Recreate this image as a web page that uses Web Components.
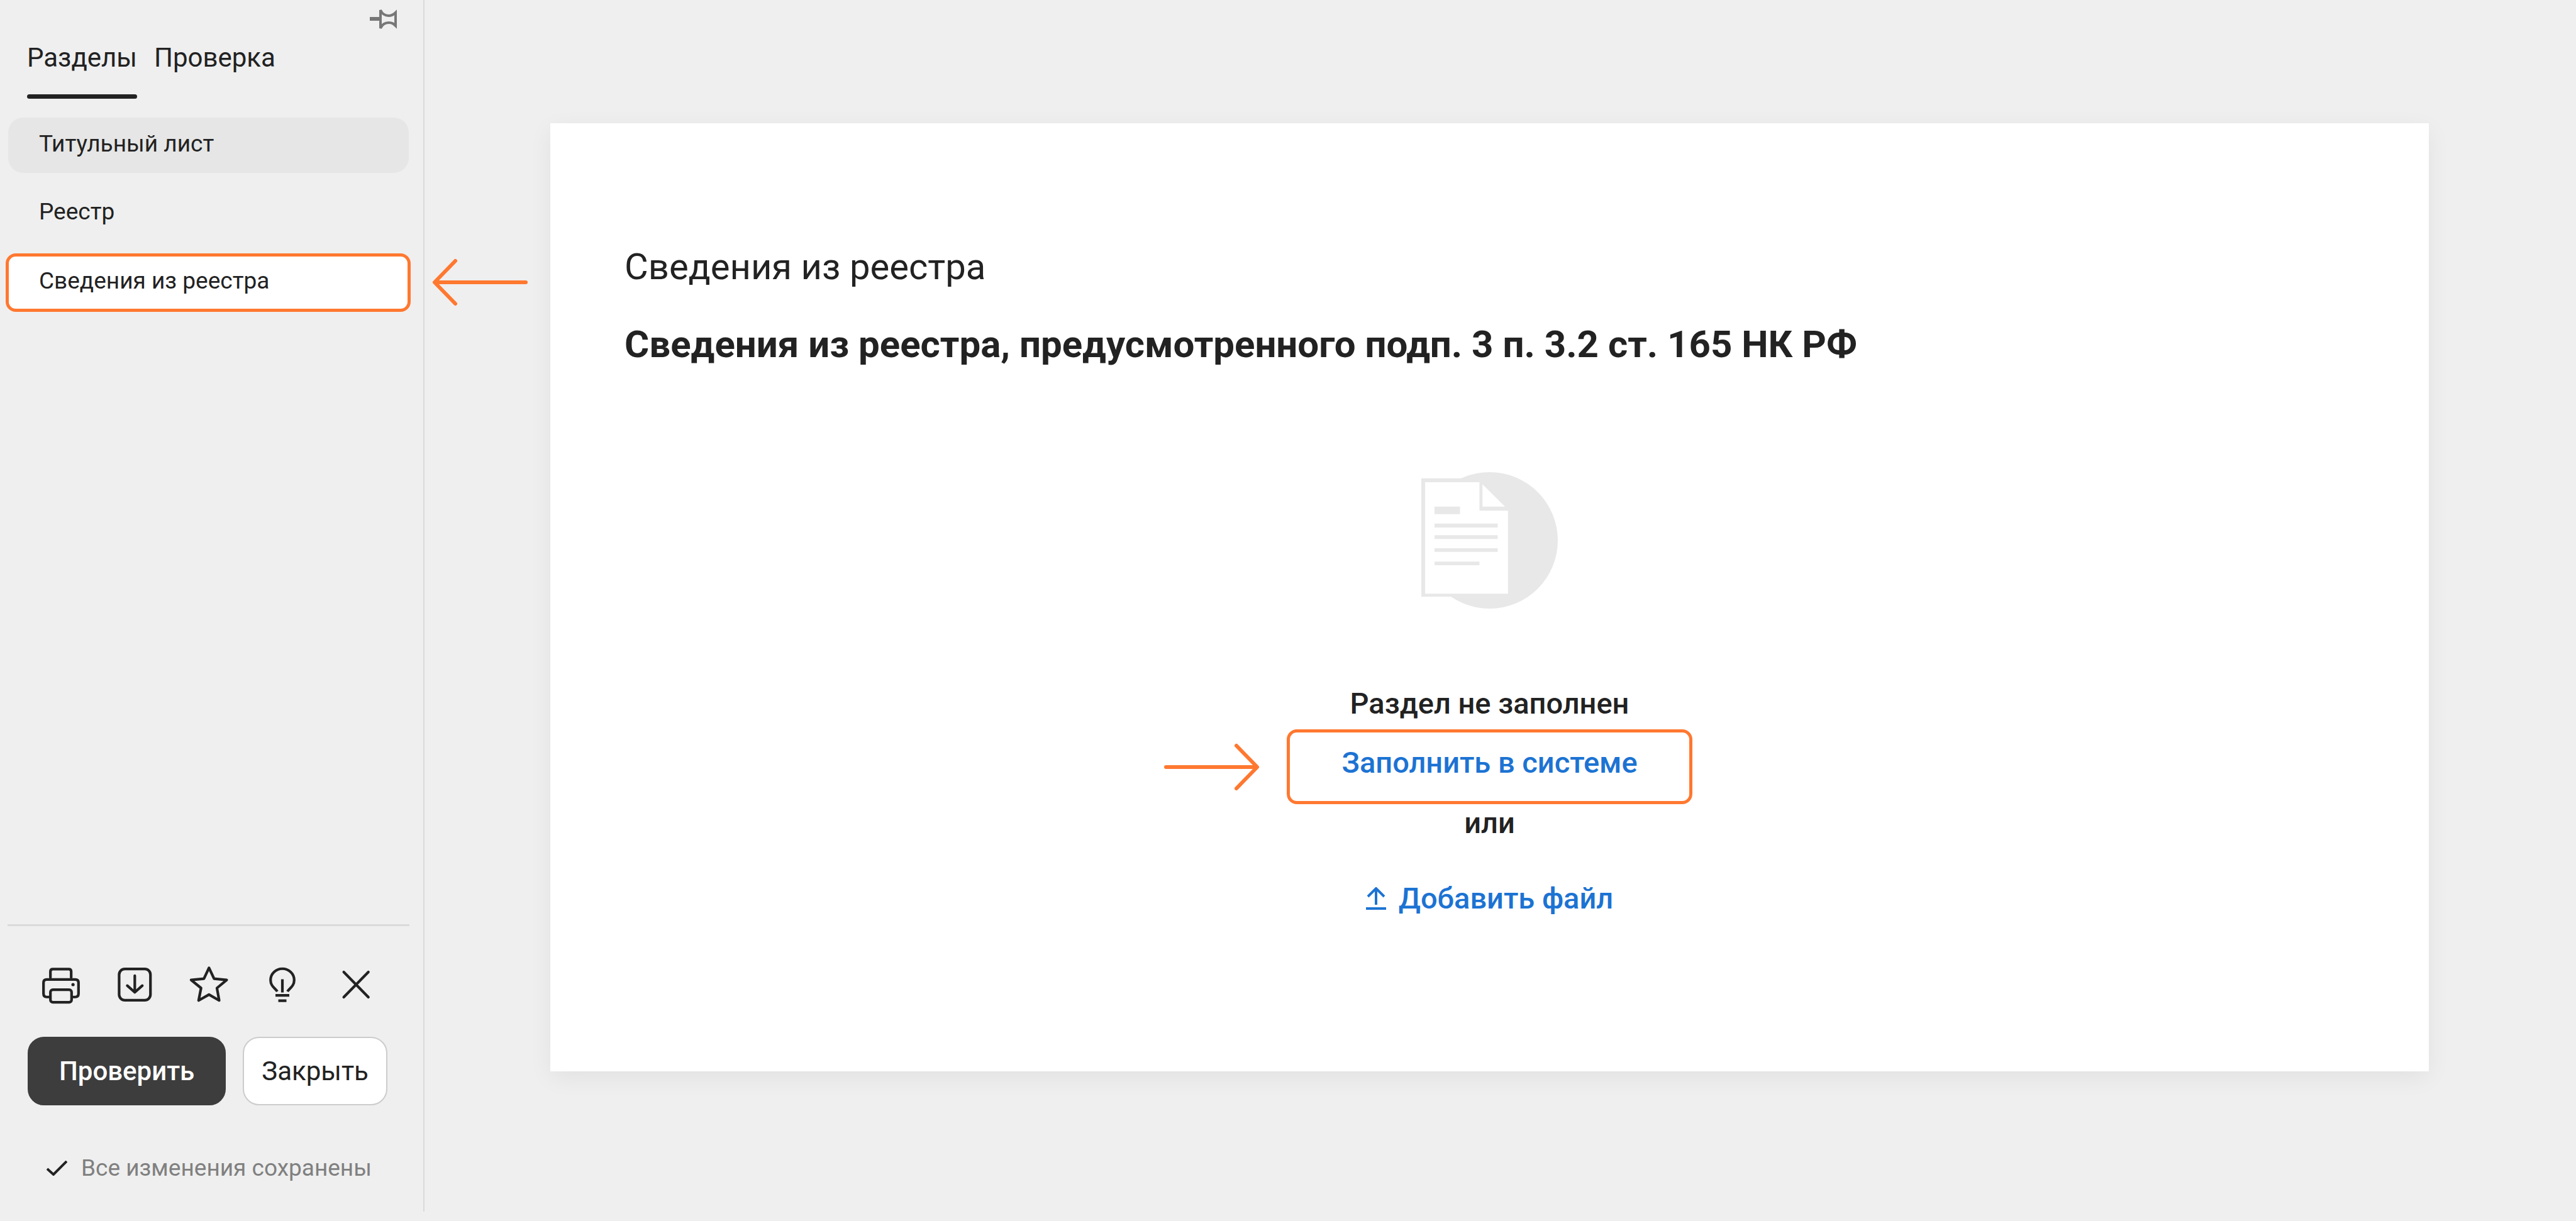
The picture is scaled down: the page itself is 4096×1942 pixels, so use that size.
<!DOCTYPE html>
<html lang="ru">
<head>
    <meta charset="utf-8">
    <meta name="viewport" content="width=device-width, initial-scale=1">
    <title>Сведения из реестра</title>
    <style>
        body {
            margin: 0;
            background-color: #efefef;
            color: #222222;
            font-family: Roboto, "Noto Sans", sans-serif;
            --accent: #ff7830;
            --link: #1c73d3;
            --line: #dadada;
        }
    </style>
</head>
<body>
    <app-shell>
        <side-panel slot="side">
            <panel-tab slot="tabs" active>Разделы</panel-tab>
            <panel-tab slot="tabs">Проверка</panel-tab>

            <section-link state="hover">Титульный лист</section-link>
            <section-link>Реестр</section-link>
            <section-link state="current">Сведения из реестра</section-link>

            <tool-button slot="tools" icon="print" label="Печать"></tool-button>
            <tool-button slot="tools" icon="download" label="Скачать"></tool-button>
            <tool-button slot="tools" icon="star" label="В избранное"></tool-button>
            <tool-button slot="tools" icon="bulb" label="Подсказка"></tool-button>
            <tool-button slot="tools" icon="cross" label="Удалить"></tool-button>

            <action-button slot="actions" primary>Проверить</action-button>
            <action-button slot="actions">Закрыть</action-button>

            <span slot="status">Все изменения сохранены</span>
        </side-panel>

        <document-sheet>
            <span slot="title">Сведения из реестра</span>
            <span slot="heading">Сведения из реестра, предусмотренного подп. 3 п. 3.2 ст. 165 НК РФ</span>
            <empty-state></empty-state>
        </document-sheet>
    </app-shell>

    <script>
        const ICONS = {
            print: `<path d="M50 67V38q0-12 12-12h78q12 0 12 12v29M48 163H32q-16 0-16-16V93q0-16 16-16h140q16 0 16 16v54q0 16-16 16h-16"/>
                <rect x="50" y="127" width="104" height="62" rx="12"/>
                <circle cx="161" cy="102" r="8" fill="currentColor" stroke="none"/>`,
            download: `<rect x="26" y="25" width="154" height="154" rx="28"/>
                <path d="M103 58v80M66 107l37 33 37-33"/>`,
            star: '<path d="M103 20l25 53 62 6-48 40 11 61-50-29-51 29 12-61-49-40 63-6z"/>',
            bulb: `<path d="M77 136C67 120 44 110 44 80a58 56 0 0 1 116 0c0 30-23 40-33 56" stroke-linecap="butt"/>
                <path d="M102 76v65M68 155h68M82 181h40" stroke-linecap="butt"/>`,
            cross: '<path d="M42 40l121 124M163 40L42 164"/>'
        };

        class AppShell extends HTMLElement {
            constructor() {
                super();
                this.attachShadow({mode: 'open'}).innerHTML = `
                <style>
                    :host {
                        display: grid;
                        grid-template-columns: 675px 1fr;
                        min-height: 100vh;
                    }

                    main {
                        padding: 196px 234px 196px 200px;
                    }
                </style>
                <slot name="side"></slot>
                <main><slot></slot></main>
                `;
            }
        }

        class SidePanel extends HTMLElement {
            constructor() {
                super();
                this.attachShadow({mode: 'open'}).innerHTML = `
                <style>
                    :host {
                        display: flex;
                        flex-direction: column;
                        box-sizing: border-box;
                        margin-bottom: 15px;
                        border-right: 2px solid var(--line);
                    }

                    .top {
                        display: flex;
                        justify-content: flex-end;
                        padding: 12px 41px 20px 0;
                    }

                    .pin {
                        padding: 0;
                        border: 0;
                        background: none;
                        color: #777777;
                        cursor: pointer;
                    }

                    svg {
                        display: block;
                        fill: none;
                        stroke: currentColor;
                    }

                    .tabs {
                        display: flex;
                        gap: 27px;
                        padding-left: 43px;
                    }

                    nav {
                        display: flex;
                        flex-direction: column;
                        gap: 20px;
                        margin: 30px 20px 0 9px;
                    }

                    footer {
                        margin-top: auto;
                        padding-bottom: 47px;
                    }

                    hr {
                        height: 3px;
                        margin: 0 22px 60px 12px;
                        border: 0;
                        background-color: var(--line);
                    }

                    .tools {
                        display: flex;
                        justify-content: space-between;
                        margin: 0 74px 50px 64px;
                    }

                    .actions {
                        display: flex;
                        gap: 27px;
                        padding-left: 44px;
                    }

                    .status {
                        display: flex;
                        align-items: center;
                        gap: 22px;
                        margin: 78px 0 0 74px;
                        color: #808080;
                        font-size: 37px;
                        line-height: 44px;
                    }

                    .status svg {
                        color: #222222;
                    }
                </style>
                <div class="top">
                    <button class="pin" type="button" aria-label="Закрепить">
                        <svg width="44" height="36" viewBox="0 0 44 36" stroke-width="4">
                            <path d="M0 18h16" stroke-width="6"/>
                            <path d="M17 4v29c3-7 7-9 13-9s8 2 11 5V8c-3 3-6 5-11 5S20 11 17 4z"/>
                        </svg>
                    </button>
                </div>
                <div class="tabs" role="tablist"><slot name="tabs"></slot></div>
                <nav><slot></slot></nav>
                <footer>
                    <hr>
                    <div class="tools"><slot name="tools"></slot></div>
                    <div class="actions"><slot name="actions"></slot></div>
                    <div class="status">
                        <svg width="33" height="24" viewBox="0 0 33 24" stroke-width="4"><path d="M1 13l10 9L32 1"/></svg>
                        <slot name="status"></slot>
                    </div>
                </footer>
                `;
            }
        }

        class PanelTab extends HTMLElement {
            connectedCallback() {
                const active = this.hasAttribute('active');
                this.attachShadow({mode: 'open'}).innerHTML = `
                <style>
                    :host {
                        display: block;
                    }

                    button {
                        display: block;
                        padding: 0;
                        border: 0;
                        background: none;
                        color: inherit;
                        font: 42px/48px Roboto, "Noto Sans", sans-serif;
                        cursor: pointer;
                    }

                    button::after {
                        content: "";
                        display: block;
                        height: 7px;
                        margin-top: 34px;
                        border-radius: 4px;
                    }

                    button[aria-selected="true"]::after {
                        background-color: #222222;
                    }
                </style>
                <button type="button" role="tab" aria-selected="${active}"><slot></slot></button>
                `;
            }
        }

        class SectionLink extends HTMLElement {
            connectedCallback() {
                const state = this.getAttribute('state');
                this.attachShadow({mode: 'open'}).innerHTML = `
                <style>
                    :host {
                        display: block;
                        position: relative;
                    }

                    a {
                        display: block;
                        margin: 0 3px 0 4px;
                        padding: 20px 49px 24px;
                        border-radius: 24px;
                        color: inherit;
                        font-size: 37px;
                        line-height: 44px;
                        text-decoration: none;
                    }

                    a.hover {
                        background-color: #e6e6e6;
                    }

                    a.current {
                        margin: 0;
                        padding: 17px 48px 22px;
                        border: 5px solid var(--accent);
                        border-radius: 16px;
                        background-color: white;
                    }

                    hint-arrow {
                        position: absolute;
                        top: 8px;
                        left: 100%;
                        margin-left: 34px;
                    }
                </style>
                <a href="#" class="${state || ''}"><slot></slot></a>
                ${state === 'current' ? '<hint-arrow direction="left"></hint-arrow>' : ''}
                `;
            }
        }

        class HintArrow extends HTMLElement {
            connectedCallback() {
                const left = this.getAttribute('direction') === 'left';
                this.attachShadow({mode: 'open'}).innerHTML = `
                <style>
                    :host {
                        display: block;
                    }

                    svg {
                        display: block;
                        fill: none;
                        stroke: var(--accent);
                        stroke-width: 6;
                        stroke-linecap: round;
                        stroke-linejoin: round;
                    }
                </style>
                <svg width="152" height="76" viewBox="0 0 152 76">
                    <path d="${left ? 'M149 38H5M37 4L4 38l33 34' : 'M3 38h144M115 4l33 34-33 34'}"/>
                </svg>
                `;
            }
        }

        class ToolButton extends HTMLElement {
            connectedCallback() {
                this.attachShadow({mode: 'open'}).innerHTML = `
                <style>
                    :host {
                        display: block;
                    }

                    button {
                        display: block;
                        padding: 0;
                        border: 0;
                        background: none;
                        color: #222222;
                        cursor: pointer;
                    }

                    svg {
                        display: block;
                        fill: none;
                        stroke: currentColor;
                        stroke-width: 13;
                        stroke-linecap: round;
                        stroke-linejoin: round;
                    }
                </style>
                <button type="button" aria-label="${this.getAttribute('label')}">
                    <svg width="66" height="66" viewBox="0 0 204 204">${ICONS[this.getAttribute('icon')]}</svg>
                </button>
                `;
            }
        }

        class ActionButton extends HTMLElement {
            constructor() {
                super();
                this.attachShadow({mode: 'open'}).innerHTML = `
                <style>
                    :host {
                        display: block;
                    }

                    button {
                        display: block;
                        height: 109px;
                        padding: 0 28px;
                        border: 2px solid #cccccc;
                        border-radius: 26px;
                        background-color: white;
                        color: #222222;
                        font: 42px/48px Roboto, "Noto Sans", sans-serif;
                        cursor: pointer;
                    }

                    :host([primary]) button {
                        padding: 0 48px;
                        border-color: #3d3d3d;
                        background-color: #3d3d3d;
                        color: white;
                        font-weight: 500;
                    }
                </style>
                <button type="button"><slot></slot></button>
                `;
            }
        }

        class DocumentSheet extends HTMLElement {
            constructor() {
                super();
                this.attachShadow({mode: 'open'}).innerHTML = `
                <style>
                    :host {
                        display: block;
                        padding: 192px 118px 247px;
                        background-color: white;
                        box-shadow: 0 10px 36px rgba(0, 0, 0, 0.06);
                    }

                    h1, h2 {
                        margin: 0;
                        line-height: 72px;
                    }

                    h1 {
                        font-size: 58px;
                        font-weight: 400;
                    }

                    h2 {
                        margin: 52px 0 167px;
                        font-size: 60px;
                        font-weight: 700;
                    }
                </style>
                <h1><slot name="title"></slot></h1>
                <h2><slot name="heading"></slot></h2>
                <slot></slot>
                `;
            }
        }

        class EmptyState extends HTMLElement {
            constructor() {
                super();
                this.attachShadow({mode: 'open'}).innerHTML = `
                <style>
                    :host {
                        display: flex;
                        flex-direction: column;
                        align-items: center;
                        font-size: 47px;
                        font-weight: 500;
                        line-height: 56px;
                    }

                    .picture {
                        display: block;
                        margin-bottom: 123px;
                        fill: #e8e8e8;
                    }

                    p {
                        margin: 0;
                    }

                    a {
                        color: var(--link);
                        text-decoration: none;
                    }

                    .fill {
                        position: relative;
                        margin: 13px 0 2px;
                    }

                    .fill a {
                        display: block;
                        padding: 20px 82px 33px;
                        border: 5px solid var(--accent);
                        border-radius: 16px;
                    }

                    .fill hint-arrow {
                        position: absolute;
                        top: 22px;
                        right: 100%;
                        margin-right: 43px;
                    }

                    .add {
                        display: flex;
                        align-items: center;
                        gap: 20px;
                        margin-top: 64px;
                    }

                    .add svg {
                        fill: none;
                        stroke: currentColor;
                        stroke-width: 4;
                    }
                </style>
                <svg class="picture" width="217" height="217" viewBox="112 78 674 674">
                    <circle cx="449" cy="415" r="337"/>
                    <path d="M112 108h300v585H112z"/>
                    <path fill="white" d="M131 128h268v140h141v410H131zM414 138v110h111z"/>
                    <path d="M177 248h126v37H177zM177 332h312v19H177zM177 389h312v19H177zM177 454h312v18H177zM177 520h222v18H177z"/>
                </svg>
                <p>Раздел не заполнен</p>
                <div class="fill">
                    <hint-arrow direction="right"></hint-arrow>
                    <a href="#">Заполнить в системе</a>
                </div>
                <p>или</p>
                <a href="#" class="add">
                    <svg width="32" height="36" viewBox="0 0 32 36"><path d="M16 28V3M3 15L16 2l13 13M0 34h32"/></svg>
                    Добавить файл
                </a>
                `;
            }
        }

        customElements.define('app-shell', AppShell);
        customElements.define('side-panel', SidePanel);
        customElements.define('panel-tab', PanelTab);
        customElements.define('section-link', SectionLink);
        customElements.define('hint-arrow', HintArrow);
        customElements.define('tool-button', ToolButton);
        customElements.define('action-button', ActionButton);
        customElements.define('document-sheet', DocumentSheet);
        customElements.define('empty-state', EmptyState);
    </script>
</body>
</html>
